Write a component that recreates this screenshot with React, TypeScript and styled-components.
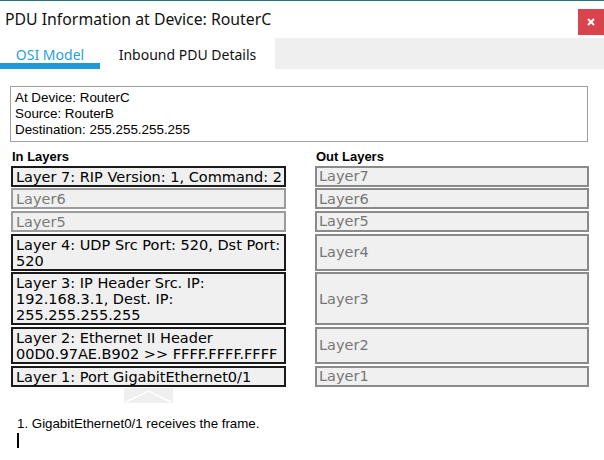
import React from "react";
import styled, { createGlobalStyle } from "styled-components";

const GlobalStyle = createGlobalStyle`
  html, body {
    margin: 0;
    padding: 0;
    background: #ffffff;
  }
  body {
    font-family: "Liberation Sans", Arial, sans-serif;
    color: #000;
  }
`;

type Layer = {
  label: string;
  active: boolean;
  out: string;
};

const layers: Layer[] = [
  { label: "Layer 7: RIP Version: 1, Command: 2", active: true, out: "Layer7" },
  { label: "Layer6", active: false, out: "Layer6" },
  { label: "Layer5", active: false, out: "Layer5" },
  { label: "Layer 4: UDP Src Port: 520, Dst Port: 520", active: true, out: "Layer4" },
  {
    label: "Layer 3: IP Header Src. IP: 192.168.3.1, Dest. IP: 255.255.255.255",
    active: true,
    out: "Layer3",
  },
  {
    label: "Layer 2: Ethernet II Header 00D0.97AE.B902 >> FFFF.FFFF.FFFF",
    active: true,
    out: "Layer2",
  },
  { label: "Layer 1: Port GigabitEthernet0/1", active: true, out: "Layer1" },
];

const App = () => {
  return (
    <>
      <GlobalStyle />
      <Window>
        <TitleBar>
          <Title>PDU Information at Device: RouterC</Title>
          <CloseButton aria-label="close">
            <svg width="8" height="8" viewBox="0 0 8 8">
              <path d="M1 1 L7 7 M7 1 L1 7" stroke="#fff" strokeWidth="2" />
            </svg>
          </CloseButton>
        </TitleBar>
        <TabBar>
          <Tab $selected>OSI Model</Tab>
          <Tab>Inbound PDU Details</Tab>
          <TabFill />
        </TabBar>
        <Content>
          <InfoBox>
            <div>At Device: RouterC</div>
            <div>Source: RouterB</div>
            <div>Destination: 255.255.255.255</div>
          </InfoBox>
          <LayerGrid>
            <Heading>In Layers</Heading>
            <Heading>Out Layers</Heading>
            {layers.map((layer) => (
              <React.Fragment key={layer.out}>
                <InLayer $active={layer.active}>{layer.label}</InLayer>
                <OutLayer>{layer.out}</OutLayer>
              </React.Fragment>
            ))}
            <ArrowCell>
              <StepArrow>
                <svg width="49" height="15" viewBox="0 0 49 15">
                  <path
                    d="M2 14 L24.5 3 L47 14"
                    fill="none"
                    stroke="#ffffff"
                    strokeWidth="1.5"
                  />
                </svg>
              </StepArrow>
            </ArrowCell>
          </LayerGrid>
          <Log>
            <div>1. GigabitEthernet0/1 receives the frame.</div>
            <Caret />
          </Log>
        </Content>
      </Window>
    </>
  );
};

export default App;

const Window = styled.div`
  width: 604px;
  height: 460px;
  display: flex;
  flex-direction: column;
  border-top: 1px solid #2a737c;
  box-sizing: border-box;
  overflow: hidden;
`;

const TitleBar = styled.div`
  display: flex;
  align-items: flex-start;
  height: 37px;
  padding-left: 5px;
`;

const Title = styled.div`
  font-family: "Noto Sans", "Open Sans", sans-serif;
  font-size: 15.8px;
  line-height: 20px;
  margin-top: 8px;
  color: #111;
`;

const CloseButton = styled.div`
  margin-left: auto;
  margin-top: 8px;
  width: 26px;
  height: 26px;
  background: #d9444c;
  display: flex;
  align-items: center;
  justify-content: center;
`;

const TabBar = styled.div`
  display: flex;
  height: 31px;
`;

const Tab = styled.div<{ $selected?: boolean }>`
  display: flex;
  align-items: center;
  justify-content: center;
  box-sizing: border-box;
  width: ${(p) => (p.$selected ? "100px" : "175px")};
  font-family: "Noto Sans", "Open Sans", sans-serif;
  font-size: 14px;
  padding-top: 1px;
  color: ${(p) => (p.$selected ? "#2a9fd8" : "#111")};
  box-shadow: ${(p) => (p.$selected ? "inset 0 -6px 0 #1e9ad6" : "none")};
  background: #fff;
`;

const TabFill = styled.div`
  flex: 1;
  background: #efefef;
`;

const Content = styled.div`
  display: flex;
  flex-direction: column;
  padding: 17px 16px 0 10px;
`;

const InfoBox = styled.div`
  border: 1px solid #a0a0a0;
  padding: 3px 4px;
  font-size: 13.4px;
  line-height: 16px;
  color: #000;
`;

const LayerGrid = styled.div`
  display: grid;
  grid-template-columns: 275px 274px;
  column-gap: 29px;
  row-gap: 1.67px;
  margin-top: 8px;
  margin-left: 1px;
`;

const Heading = styled.div`
  font-size: 13px;
  font-weight: bold;
  line-height: 14px;
  padding-left: 1px;
`;

const LayerBox = styled.div`
  box-sizing: border-box;
  background: #f0f0f0;
  font-family: "DejaVu Sans", Verdana, sans-serif;
  font-size: 14.5px;
  line-height: 16px;
  padding: 1px 0 0 3px;
  border: 2px solid;
`;

const InLayer = styled(LayerBox)<{ $active: boolean }>`
  border-color: ${(p) => (p.$active ? "#1a1a1a" : "#9c9c9c")};
  color: ${(p) => (p.$active ? "#000" : "#7a7a7a")};
`;

const OutLayer = styled(LayerBox)`
  border-color: #8a8a8a;
  color: #777;
  display: flex;
  align-items: center;
  padding: 0 2px;
`;

const ArrowCell = styled.div`
  display: flex;
  justify-content: center;
`;

const StepArrow = styled.div`
  width: 49px;
  height: 15px;
  background: #efefef;
  display: flex;
`;

const Log = styled.div`
  margin-top: 14px;
  margin-left: 7px;
  font-size: 13.3px;
  line-height: 14px;
  color: #000;
`;

const Caret = styled.div`
  width: 2px;
  height: 15px;
  background: #000;
  margin-top: 2px;
`;
